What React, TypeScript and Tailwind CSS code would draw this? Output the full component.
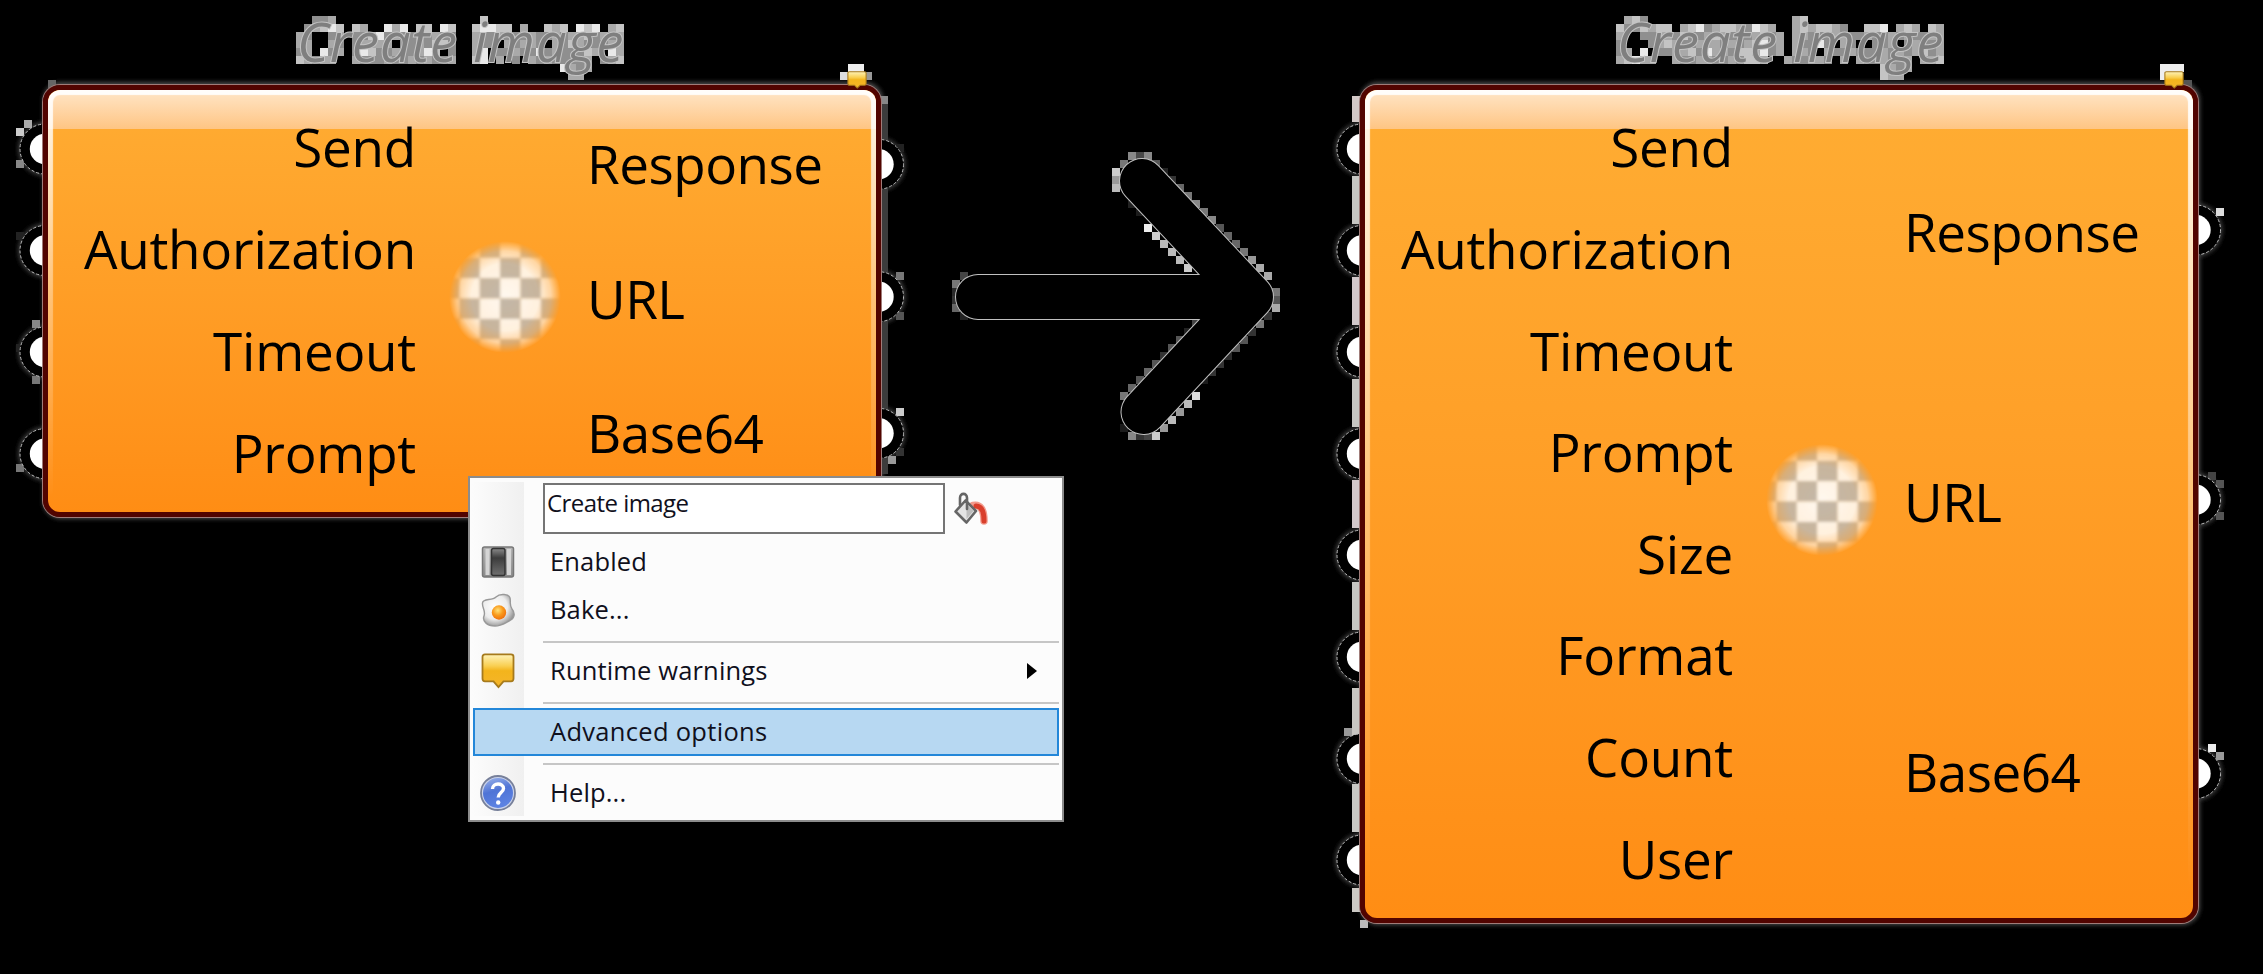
import React from "react";

type Block = [number, number, string, number?, number?];

const SHADES: Record<string, string> = {
  a: "#8f8f8f",
  b: "#a9a9a9",
  c: "#c4c4c4",
  d: "#e9e9e9",
};

const TITLE_LEFT = [
  "..aab..................c.................",
  ".abcdc.cb..dbd.cc.dc..cddcc.b..cbc.dcd.bc",
  "ba..ab.aacdabaababaa..baabaaabaababbcabab",
  "bb..ba.abbbb.aabacca..baa.babba.bacbaaabb",
  "ab.dab.adcaabaabdc.a..bd.aabaadabaaacb.db",
  "cbabb..baaabaababaab..cd.b.a.babaaaab.abc",
  ".................................dbab....",
  "..................................bb.....",
];

const TITLE_RIGHT = [
  ".bca..................bc.................",
  "caacbcc.bcdabccbadcb..bcbccba..ccd.bcb.cb",
  "b..aabbacaabcbaaabcab.bbaaabbaabaababaabb",
  "a...abcbaabbbababcdab.baada.ba..aab.abaab",
  "ab.d.aabbcadbbaccbdab.bba.baabaaabababcab",
  "bcdbb..baabbaabaccb..baabba.b.baabaab.bbc",
  ".................................cbab....",
  ".................................cbb.....",
];

const ARROW_BLOCKS: Block[] = [
  [564, 36, "#888"], [588, 36, "#484848"], [612, 36, "#888"], [540, 60, "#777"], [636, 60, "#555"],
  [516, 84, "#ccc"], [516, 108, "#999"], [516, 132, "#bbb"],
  [660, 84, "#222"], [684, 108, "#333"], [708, 132, "#666"], [732, 156, "#777"], [756, 180, "#888"],
  [780, 204, "#777"], [804, 228, "#888"], [828, 252, "#555"], [852, 276, "#666"], [876, 300, "#666"],
  [900, 324, "#777"], [924, 348, "#999"], [948, 372, "#aaa"], [972, 396, "#aaa"],
  [996, 444, "#777"], [996, 468, "#555"], [996, 492, "#aaa"],
  [564, 180, "#222"], [588, 204, "#1c1c1c"], [612, 252, "#eee"], [636, 276, "#ccc"], [660, 300, "#bbb"],
  [684, 324, "#bbb"], [708, 348, "#bbb"], [732, 372, "#ccc"],
  [60, 396, "#444"], [36, 420, "#777"], [36, 444, "#2a2a2a"], [36, 468, "#333"], [36, 492, "#666"], [60, 516, "#222"],
  [756, 540, "#444"], [732, 564, "#222"], [708, 588, "#555"], [684, 612, "#555"], [660, 636, "#333"],
  [636, 660, "#555"], [612, 684, "#666"], [588, 708, "#555"], [564, 732, "#666"], [540, 756, "#777"],
  [540, 852, "#1c1c1c"], [564, 876, "#888"], [588, 876, "#333"], [612, 876, "#444"], [636, 876, "#ccc"],
  [660, 852, "#999"], [684, 828, "#bbb"], [708, 804, "#999"], [732, 780, "#bbb"], [756, 756, "#ddd"],
  [780, 708, "#1c1c1c"], [804, 684, "#333"], [828, 660, "#333"], [852, 636, "#2a2a2a"], [876, 612, "#555"],
  [900, 588, "#555"], [924, 564, "#333"], [948, 540, "#777"], [972, 516, "#333"],
];

function Mosaic({ rows }: { rows: string[] }) {
  return (
    <svg className="absolute inset-0" width="328" height="64" shapeRendering="crispEdges">
      {rows.flatMap((row, y) =>
        row.split("").map((ch, x) =>
          ch === "." ? null : <rect key={`${x}-${y}`} x={x * 8} y={y * 8} width="8" height="8" fill={SHADES[ch]} />
        )
      )}
    </svg>
  );
}

function Blocks({ items }: { items: Block[] }) {
  return (
    <g shapeRendering="crispEdges">
      {items.map(([x, y, fill, w = 8, h = 8], i) => (
        <rect key={i} x={x} y={y} width={w} height={h} fill={fill} />
      ))}
    </g>
  );
}

function WarningBalloon({ className }: { className: string }) {
  return (
    <svg className={className} viewBox="0 0 34 38" preserveAspectRatio="none">
      <defs>
        <linearGradient id="balloon" x1="0" y1="0" x2="0" y2="1">
          <stop offset="0" stopColor="#fff3b8" />
          <stop offset="0.35" stopColor="#f9cf52" />
          <stop offset="0.5" stopColor="#f3b41c" />
          <stop offset="1" stopColor="#f5b52a" />
        </linearGradient>
      </defs>
      <path
        d="M4 1.5H30Q32.5 1.5 32.5 4V27Q32.5 30 30 30H22.5L17.5 36L12.5 30H4Q1.5 30 1.5 27V4Q1.5 1.5 4 1.5Z"
        fill="url(#balloon)"
        stroke="#a67a1c"
        strokeWidth="1.8"
      />
    </svg>
  );
}

function CheckerIcon({ id }: { id: string }) {
  const cells = [];
  for (let r = 0; r < 6; r++)
    for (let c = 0; c < 6; c++)
      cells.push(
        <rect key={`${r}${c}`} x={c * 20.4 - 10.1} y={r * 20.4 - 1.7} width="20.6" height="20.6" fill={(r + c) % 2 ? "#fff8ef" : "#c3b7a8"} />
      );
  return (
    <svg width="112" height="116" viewBox="0 0 112 116">
      <defs>
        <radialGradient id={`${id}-fade`}>
          <stop offset="0" stopColor="#fff" />
          <stop offset="0.6" stopColor="#fff" stopOpacity="0.92" />
          <stop offset="0.82" stopColor="#fff" stopOpacity="0.62" />
          <stop offset="1" stopColor="#fff" stopOpacity="0" />
        </radialGradient>
        <mask id={`${id}-mask`}>
          <circle cx="56" cy="58" r="56" fill={`url(#${id}-fade)`} />
        </mask>
        <filter id={`${id}-soft`}>
          <feGaussianBlur stdDeviation="1.5" />
        </filter>
      </defs>
      <g mask={`url(#${id}-mask)`}>
        <g filter={`url(#${id}-soft)`}>{cells}</g>
      </g>
    </svg>
  );
}

interface NodeProps {
  id: string;
  frame: string;
  height: number;
  inputs: string[];
  outputs: string[];
  inputNubs: number[];
  outputNubs: number[];
  titleRows: string[];
  titleClass: string;
  badgeClass: string;
  under: Block[];
}

function ComponentNode(p: NodeProps) {
  const nubs = [...p.inputNubs.map((y) => [45, y]), ...p.outputNubs.map((y) => [878.5, y])];
  return (
    <section className={p.frame}>
      <svg className="absolute -left-[43px] top-[-85px] overflow-visible" width="930" height={p.height + 110}>
        <defs>
          <filter id={`${p.id}-halo`} x="-10%" y="-10%" width="120%" height="120%">
            <feGaussianBlur stdDeviation="2.2" />
          </filter>
        </defs>
        <rect x="43" y="82" width="840" height={p.height + 5} rx="18" fill="#4a4a4a" filter={`url(#${p.id}-halo)`} />
        {nubs.map(([x, y]) => (
          <circle key={`${x}-${y}`} cx={x} cy={y} r="27" fill="#3c3c3c" filter={`url(#${p.id}-halo)`} />
        ))}
        <Blocks items={p.under} />
        {nubs.map(([x, y]) => (
          <g key={`${x}-${y}`}>
            <circle cx={x} cy={y} r="25" fill="#000" stroke="#bbb" strokeWidth="1" strokeDasharray="3 2" />
            <circle cx={x} cy={y} r="15.2" fill="#fff" />
          </g>
        ))}
      </svg>
      <div className={p.titleClass}>
        <Mosaic rows={p.titleRows} />
        <span className="relative block pl-px text-[54px] leading-[51px] tracking-[1px] whitespace-nowrap italic text-[#7f7f7f] [-webkit-text-stroke:2px_#c4c4c4] [paint-order:stroke_fill]">
          Create image
        </span>
      </div>
      <div className="relative flex h-full w-full overflow-hidden rounded-[17px] border-[5px] border-[#520400] bg-linear-to-b from-[#ffad33] to-[#ff8d14] pt-[6px] pb-[9px] shadow-[0_0_0_1px_#a07c79]">
        <div className="absolute inset-x-0 top-0 h-[39px] bg-linear-to-b from-[#ffe6c8] to-[#fec583]" />
        <div className="absolute inset-0 rounded-[12px] shadow-[inset_0_0_1px_5px_rgba(255,255,255,0.92)] [mask-image:linear-gradient(to_bottom,#000_0%,rgba(0,0,0,0.4)_50%,transparent_97%)]" />
        <ul className="relative flex w-[368px] flex-col text-right tracking-[-0.25px]">
          {p.inputs.map((t) => (
            <li key={t} className="flex flex-1 items-center justify-end">{t}</li>
          ))}
        </ul>
        <div className="relative flex w-[171px] items-center justify-center pb-[5px] pl-[6px]">
          <CheckerIcon id={p.id} />
        </div>
        <ul className="relative flex flex-1 flex-col pb-[3px] tracking-[-0.5px]">
          {p.outputs.map((t) => (
            <li key={t} className="flex flex-1 items-center">{t}</li>
          ))}
        </ul>
      </div>
      <div className={p.badgeClass}>
        <WarningBalloon className="h-[18px] w-[20px]" />
      </div>
    </section>
  );
}

function SwitchIcon() {
  return (
    <svg width="36" height="36" viewBox="0 0 36 36">
      <defs>
        <linearGradient id="sw-frame" x1="0" y1="0" x2="0" y2="1">
          <stop offset="0" stopColor="#b5b5b5" />
          <stop offset="1" stopColor="#8b8b8b" />
        </linearGradient>
        <linearGradient id="sw-key" x1="0" y1="0" x2="0" y2="1">
          <stop offset="0" stopColor="#8a8a8a" />
          <stop offset="0.35" stopColor="#3c3c3c" />
          <stop offset="1" stopColor="#707070" />
        </linearGradient>
      </defs>
      <rect x="2.5" y="3" width="31" height="30" rx="2" fill="url(#sw-frame)" stroke="#777" strokeWidth="1.5" />
      <rect x="5.5" y="5" width="4" height="26" fill="#d5d5d5" />
      <rect x="27" y="5" width="4" height="26" fill="#d5d5d5" />
      <rect x="11.5" y="4.5" width="13.5" height="27" rx="2" fill="url(#sw-key)" stroke="#333" strokeWidth="1.5" />
    </svg>
  );
}

function EggIcon() {
  return (
    <svg width="36" height="36" viewBox="0 0 36 36">
      <defs>
        <radialGradient id="egg-white" cx="0.4" cy="0.4" r="0.65">
          <stop offset="0" stopColor="#fff" />
          <stop offset="0.6" stopColor="#ececec" />
          <stop offset="1" stopColor="#8f8f8f" />
        </radialGradient>
        <radialGradient id="egg-yolk" cx="0.42" cy="0.35" r="0.7">
          <stop offset="0" stopColor="#ffe27a" />
          <stop offset="0.5" stopColor="#f99a1c" />
          <stop offset="1" stopColor="#ee6a0b" />
        </radialGradient>
      </defs>
      <path
        d="M16 5C20 1 29 2 30 6C31 10 29 13 32 17C36 22 34 27 29 29C25 31 21 34 15 34C7 34 2 29 4 24C6 19 2 16 2.5 11C3 6 12 9 16 5Z"
        fill="url(#egg-white)"
        stroke="#999"
        strokeWidth="1.4"
      />
      <circle cx="19" cy="20.500" r="7.200" fill="url(#egg-yolk)" />
    </svg>
  );
}

function HelpIcon() {
  return (
    <svg width="38" height="38" viewBox="0 0 38 38">
      <defs>
        <linearGradient id="help-blue" x1="0" y1="0" x2="0.3" y2="1">
          <stop offset="0" stopColor="#9db4ea" />
          <stop offset="0.5" stopColor="#4f74d6" />
          <stop offset="1" stopColor="#5c82e2" />
        </linearGradient>
      </defs>
      <circle cx="19" cy="19" r="17" fill="#c9d2ea" stroke="#77809a" strokeWidth="1.8" />
      <circle cx="19" cy="19" r="15" fill="url(#help-blue)" />
      <path d="M13.5 15C13.5 8.5 24.5 8.5 24.5 14.5C24.5 18.5 19.2 18.5 19.2 23.5" fill="none" stroke="#fff" strokeWidth="3.4" />
      <circle cx="19.2" cy="28.5" r="2.2" fill="#fff" />
    </svg>
  );
}

function BucketIcon() {
  return (
    <svg width="36" height="34" viewBox="0 0 36 34">
      <path d="M20 13.500C27 12 31 17 31 29" fill="none" stroke="#f29a8c" strokeWidth="7.500" strokeLinecap="round" />
      <path d="M23 14C28 14 31 19 31 29" fill="none" stroke="#d93f2c" strokeWidth="5" strokeLinecap="round" />
      <path d="M2.500 19.500L12.500 8.500L23 19L13.500 30.500Z" fill="#e4e4e4" stroke="#666" strokeWidth="2.600" strokeLinejoin="round" />
      <path d="M13.500 12L20.500 19L13.500 27Z" fill="#bdbdbd" />
      <path d="M7 13V6C7 0.500 14 0.500 14 6V17" fill="none" stroke="#666" strokeWidth="2.600" strokeLinecap="round" />
    </svg>
  );
}

function MenuRow({ icon, label, submenu, active }: { icon?: React.ReactNode; label: string; submenu?: boolean; active?: boolean }) {
  return (
    <div
      className={
        active
          ? "relative mx-[3px] flex h-[48px] items-center border-2 border-[#2387d9] bg-[#b7d8f2] pl-[75px] tracking-[0.3px]"
          : "relative flex h-[48px] items-center"
      }
    >
      {!active && <div className="flex w-[56px] items-center justify-center">{icon}</div>}
      <span className={active ? "" : "pl-[24px]"}>{label}</span>
      {submenu && (
        <svg className="mr-[25px] ml-auto" width="10" height="16" viewBox="0 0 10 16">
          <path d="M0 0L10 8L0 16Z" fill="#000" />
        </svg>
      )}
    </div>
  );
}

function MenuSeparator() {
  return <div className="relative mt-[7px] mr-[3px] mb-[4px] ml-[73px] h-[2px] bg-[#c6c6c6]" />;
}

function ContextMenu() {
  return (
    <div className="absolute top-[476px] left-[468px] flex h-[346px] w-[596px] flex-col border-2 border-[#8c8c8c] bg-[#fcfcfc] text-[25.5px] tracking-[0.15px] text-[#10101c]">
      <div className="absolute inset-y-[4px] left-[2px] w-[52px] bg-linear-to-r from-[#fcfcfc] to-[#f0f0f0]" />
      <div className="relative mt-[5px] flex h-[55px] items-start">
        <div className="ml-[73px] h-[51px] w-[402px] border-2 border-[#757575] bg-white pl-[2px] text-[24px] leading-[36px] tracking-[-0.55px]">
          Create image
        </div>
        <div className="mt-[9px] ml-[8px]">
          <BucketIcon />
        </div>
      </div>
      <MenuRow icon={<SwitchIcon />} label="Enabled" />
      <MenuRow icon={<EggIcon />} label="Bake..." />
      <MenuSeparator />
      <MenuRow icon={<WarningBalloon className="h-[36px] w-[34px]" />} label="Runtime warnings" submenu />
      <MenuSeparator />
      <MenuRow label="Advanced options" active />
      <MenuSeparator />
      <MenuRow icon={<HelpIcon />} label="Help..." />
    </div>
  );
}

function BigArrow() {
  const d = "M978 297H1251M1142 181L1251 297L1143.5 412";
  return (
    <svg className="absolute top-[140px] left-[940px]" width="360" height="310" viewBox="940 140 360 310">
      <Blocks items={ARROW_BLOCKS.map(([x, y, c]): Block => [940 + x / 3, 140 + y / 3, c])} />
      <path d={d} fill="none" stroke="#c0c0c0" strokeWidth="46" strokeLinecap="round" strokeLinejoin="round" />
      <path d={d} fill="none" stroke="#000" strokeWidth="44" strokeLinecap="round" strokeLinejoin="round" />
    </svg>
  );
}

const LEFT_UNDER: Block[] = [
  [24, 120, "#aaa"], [16, 128, "#ccc"], [16, 160, "#888"], [32, 320, "#888"], [32, 376, "#777"], [16, 464, "#777"],
  [16, 232, "#222"], [16, 344, "#222"], [48, 80, "#666"],
  [848, 64, "#eee", 16], [840, 72, "#ddd"], [864, 72, "#999"], [880, 96, "#888"],
  [881, 104, "#3c3c3c", 7, 370],
  [896, 272, "#777"], [896, 312, "#555"], [896, 408, "#ccc"], [888, 456, "#999"], [896, 448, "#333"], [896, 144, "#222"],
];

const RIGHT_UNDER: Block[] = [
  [35, 96, "#d2c8c6", 8, 26], [35, 176, "#c6c6c2", 8, 48], [35, 277, "#d2c8ca", 8, 48], [35, 379, "#c6c6c2", 8, 48],
  [35, 480, "#d2c8ca", 8, 48], [35, 582, "#c6c6c2", 8, 48], [35, 688, "#c8c6c2", 8, 48], [35, 784, "#c8c8c4", 8, 48],
  [35, 888, "#ccc9c4", 8, 24], [43, 920, "#bbb"], [27, 728, "#999"],
  [843, 64, "#eee", 24], [843, 72, "#eee"], [867, 80, "#555"],
  [899, 208, "#ddd"], [891, 472, "#444"], [899, 480, "#555"], [899, 512, "#555"],
  [891, 744, "#eee"], [899, 752, "#999"],
];

const OUTPUTS = ["Response", "URL", "Base64"];

export default function App() {
  return (
    <main className="relative h-[974px] w-[2263px] overflow-hidden bg-black font-['Open_Sans','Noto_Sans',sans-serif] text-[53px] leading-none text-black">
      <ComponentNode
        id="basic"
        frame="absolute left-[43px] top-[85px] h-[432px] w-[838px]"
        height={432}
        inputs={["Send", "Authorization", "Timeout", "Prompt"]}
        outputs={OUTPUTS}
        inputNubs={[149, 250.5, 352, 453.7]}
        outputNubs={[164.3, 296.7, 433.3]}
        titleRows={TITLE_LEFT}
        titleClass="absolute top-[-69px] left-[253px] h-[64px] w-[328px]"
        badgeClass="absolute top-[-14px] left-[804px]"
        under={LEFT_UNDER}
      />
      <BigArrow />
      <ComponentNode
        id="advanced"
        frame="absolute left-[1360px] top-[85px] h-[838px] w-[838px]"
        height={838}
        inputs={["Send", "Authorization", "Timeout", "Prompt", "Size", "Format", "Count", "User"]}
        outputs={OUTPUTS}
        inputNubs={[149, 250.5, 352, 453.7, 555, 657, 758.7, 860]}
        outputNubs={[230, 499.7, 773.5]}
        titleRows={TITLE_RIGHT}
        titleClass="absolute top-[-69px] left-[256px] h-[64px] w-[328px]"
        badgeClass="absolute top-[-14px] left-[804px]"
        under={RIGHT_UNDER}
      />
      <ContextMenu />
    </main>
  );
}
